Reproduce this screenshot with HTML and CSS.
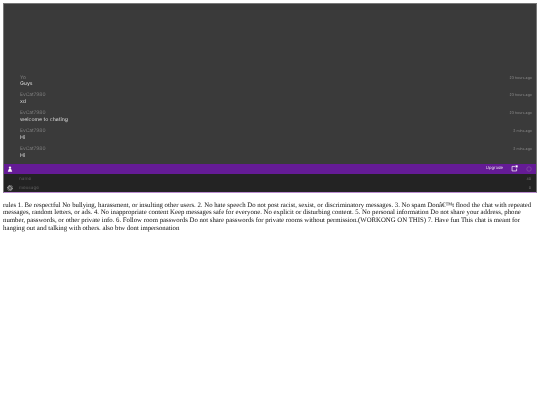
FILE: index.html
```html
<!DOCTYPE html>
<html lang="en">
<head>
<meta charset="utf-8">
<title>Chat</title>
<link rel="stylesheet" href="styles.css">
</head>
<body>
<main class="chat">
  <section class="messages">
    <article class="msg"><div class="line"><span class="name">Yo</span><span class="time">23 hours ago</span></div><div class="text">Guys</div></article>
    <article class="msg"><div class="line"><span class="name">EvCat7980</span><span class="time">23 hours ago</span></div><div class="text">xd</div></article>
    <article class="msg"><div class="line"><span class="name">EvCat7980</span><span class="time">23 hours ago</span></div><div class="text">welcome to chating</div></article>
    <article class="msg"><div class="line"><span class="name">EvCat7980</span><span class="time">2 mins ago</span></div><div class="text">Hi</div></article>
    <article class="msg"><div class="line"><span class="name">EvCat7980</span><span class="time">2 mins ago</span></div><div class="text">Hi</div></article>
  </section>
  <div class="bar">
    <svg class="user" viewBox="0 0 8 8"><circle cx="4" cy="2.2" r="1.6"/><path d="M1 7.5 2.5 4h3L7 7.5z"/></svg>
    <span class="upgrade">Upgrade</span>
    <svg class="share" viewBox="0 0 10 10"><path d="M6 2H1.5v6.5H8V5" fill="none" stroke="#fff" stroke-width="1"/><rect x="6.5" y="0.5" width="3" height="3" fill="#fff"/></svg>
    <svg class="ring" viewBox="0 0 8 8"><circle cx="4" cy="4" r="3" fill="none" stroke="#8a5aa5" stroke-width="0.8"/></svg>
  </div>
  <div class="composer">
    <svg class="gear" viewBox="0 0 8 8"><circle cx="4" cy="4" r="3.2" fill="none" stroke="#a5a5a5" stroke-width="1.4" stroke-dasharray="1.2 0.6"/><circle cx="4" cy="4" r="1.9" fill="none" stroke="#a5a5a5" stroke-width="1.2"/></svg>
    <div class="fields">
      <div class="field">name<span class="side">40</span></div>
      <div class="field">message<span class="side">0</span></div>
    </div>
  </div>
</main>
<p class="rules">rules 1. Be respectful No bullying, harassment, or insulting other users. 2. No hate speech Do not post racist, sexist, or discriminatory messages. 3. No spam Donâ€™t flood the chat with repeated messages, random letters, or ads. 4. No inappropriate content Keep messages safe for everyone. No explicit or disturbing content. 5. No personal information Do not share your address, phone number, passwords, or other private info. 6. Follow room passwords Do not share passwords for private rooms without permission.(WORKONG ON THIS) 7. Have fun This chat is meant for hanging out and talking with others. also btw dont impersonation</p>
</body>
</html>
```

FILE: styles.css
```css
* { box-sizing: border-box; }
html, body { margin: 0; padding: 0; background: #fff; }
body {
  padding: 3px 3px 0;
  font-family: "Liberation Serif", serif;
  text-rendering: geometricPrecision;
  filter: blur(0.25px);
}
.chat {
  width: 534px;
  height: 190px;
  display: flex;
  flex-direction: column;
  background: #3a3a3a;
  border: 1px solid #777;
  border-bottom-color: #b98ccf;
  font-family: Inter, "Liberation Sans", sans-serif;
}
.messages {
  flex: 1;
  display: flex;
  flex-direction: column;
  justify-content: flex-end;
  gap: 3.1px;
  padding: 0 4px 3.8px 16px;
}
.msg { height: 14.8px; }
.line { display: flex; justify-content: space-between; align-items: center; height: 7.4px; }
.name { font-size: 4.9px; color: #808080; }
.time { font-size: 3.6px; color: #8c8c8c; }
.text { font-size: 5.2px; line-height: 7.4px; color: #dedede; }
.bar {
  height: 9.5px;
  flex: none;
  display: flex;
  align-items: center;
  background: #651b96;
  padding: 0 4px 0 3px;
}
.user { width: 6px; height: 6px; fill: #fff; margin-right: auto; }
.upgrade { font-size: 4.2px; color: #e6dcec; margin-right: 7.5px; }
.share { width: 7px; height: 7px; margin-right: 8.5px; }
.ring { width: 6px; height: 6px; }
.composer {
  flex: none;
  height: 18.5px;
  display: flex;
  align-items: flex-end;
  background: #232323;
  padding: 1px 5px 0 3px;
}
.gear { width: 6px; height: 6px; margin: 0 6px 1.3px 0; flex: none; }
.fields { flex: 1; }
.field {
  display: flex;
  justify-content: space-between;
  align-items: center;
  height: 8.75px;
  font-size: 4.7px;
  color: #5a5a5a;
}
.side { font-size: 3.5px; color: #777; }
.rules {
  margin: 8.5px 0 0;
  font-size: 6.77px;
  line-height: 7.75px;
  color: #111;
}
```
